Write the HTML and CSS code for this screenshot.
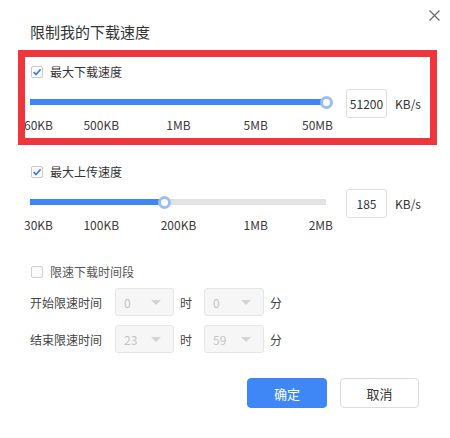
FILE: index.html
```html
<!DOCTYPE html>
<html lang="zh-CN">
<head>
<meta charset="utf-8">
<title>限制我的下载速度</title>
<link rel="stylesheet" href="styles.css">
</head>
<body>
<div class="dialog">
  <div class="title">限制我的下载速度</div>
  <button class="close" aria-label="关闭">
    <svg width="11" height="11" viewBox="0 0 11 11"><path d="M0.5 0.5 L10.5 10.5 M10.5 0.5 L0.5 10.5" stroke="#6a6a6a" stroke-width="1.2" fill="none"/></svg>
  </button>

  <div class="section highlight">
    <label class="check-row">
      <span class="checkbox checked"><svg width="10" height="10" viewBox="0 0 10 10"><path d="M1.6 5.2 L4 7.5 L8.6 2.4" stroke="#3d7ff0" stroke-width="1.8" fill="none"/></svg></span>
      <span class="check-label">最大下载速度</span>
    </label>
    <div class="slider-row">
      <div class="track">
        <div class="fill" style="width:100%"></div>
        <div class="thumb" style="left:100%"></div>
      </div>
      <div class="num-input">51200</div>
      <span class="unit">KB/s</span>
    </div>
    <div class="marks">
      <span class="mark first"><span>60KB</span></span>
      <span class="mark"><span>500KB</span></span>
      <span class="mark"><span>1MB</span></span>
      <span class="mark"><span>5MB</span></span>
      <span class="mark last"><span>50MB</span></span>
    </div>
  </div>

  <div class="section upload">
    <label class="check-row">
      <span class="checkbox checked"><svg width="10" height="10" viewBox="0 0 10 10"><path d="M1.6 5.2 L4 7.5 L8.6 2.4" stroke="#3d7ff0" stroke-width="1.8" fill="none"/></svg></span>
      <span class="check-label">最大上传速度</span>
    </label>
    <div class="slider-row">
      <div class="track">
        <div class="fill" style="width:45.6%"></div>
        <div class="thumb" style="left:45.6%"></div>
      </div>
      <div class="num-input">185</div>
      <span class="unit">KB/s</span>
    </div>
    <div class="marks">
      <span class="mark first"><span>30KB</span></span>
      <span class="mark"><span>100KB</span></span>
      <span class="mark"><span>200KB</span></span>
      <span class="mark"><span>1MB</span></span>
      <span class="mark last"><span>2MB</span></span>
    </div>
  </div>

  <div class="section period">
    <label class="check-row">
      <span class="checkbox"></span>
      <span class="check-label muted">限速下载时间段</span>
    </label>
    <div class="time-row first-row">
      <span class="row-label">开始限速时间</span>
      <span class="select"><span class="val">0</span><span class="arrow"></span></span>
      <span class="suffix">时</span>
      <span class="select wide"><span class="val">0</span><span class="arrow"></span></span>
      <span class="suffix">分</span>
    </div>
    <div class="time-row">
      <span class="row-label">结束限速时间</span>
      <span class="select"><span class="val">23</span><span class="arrow"></span></span>
      <span class="suffix">时</span>
      <span class="select wide"><span class="val">59</span><span class="arrow"></span></span>
      <span class="suffix">分</span>
    </div>
  </div>

  <div class="buttons">
    <button class="btn primary">确定</button>
    <button class="btn">取消</button>
  </div>
</div>
</body>
</html>
```

FILE: styles.css
```css
* { box-sizing: border-box; }
html, body { margin: 0; padding: 0; background: #fff; }
body {
  font-family: "Noto Sans CJK SC", "Noto Sans", sans-serif;
  color: #333;
  font-size: 12px;
}
.dialog {
  position: relative;
  width: 450px;
  height: 438px;
  overflow: hidden;
  padding-top: 22px;
}
.title {
  font-size: 15px;
  line-height: 20px;
  height: 20px;
  margin-left: 30px;
  color: #333;
}
.close {
  position: absolute;
  top: 10px;
  left: 429px;
  width: 11px;
  height: 11px;
  padding: 0;
  border: 0;
  background: none;
  line-height: 0;
}
.section { }
.highlight {
  margin: 8px 13px 0 18px;
  border: 7px solid #f2353b;
  padding: 5px 0 5px 5px;
  overflow: hidden;
}
.upload {
  margin-top: 17px;
  padding-left: 30px;
}
.period {
  margin-top: 29px;
  padding-left: 30px;
}
.check-row {
  display: flex;
  align-items: center;
  height: 20px;
}
.checkbox {
  width: 12px;
  height: 12px;
  margin-left: 1px;
  border: 1px solid #cfcfcf;
  border-radius: 2px;
  background: #fbfbfb;
  display: flex;
  align-items: center;
  justify-content: center;
}
.checkbox.checked { border-color: #c9c9c9; background: #fff; }
.check-label {
  margin-left: 7px;
  font-size: 12px;
  line-height: 20px;
  color: #333;
}
.check-label.muted { color: #555; }
.slider-row {
  display: flex;
  align-items: center;
  height: 29px;
  margin-top: 7px;
}
.track {
  position: relative;
  width: 296px;
  height: 6px;
  background: #e3e3e3;
  margin-bottom: 3px;
}
.fill {
  height: 100%;
  background: #3f86f4;
}
.thumb {
  position: absolute;
  top: 50%;
  width: 13px;
  height: 13px;
  margin: -6.5px 0 0 -6.5px;
  border-radius: 50%;
  border: 3px solid #9bbdf6;
  background: #fff;
}
.num-input {
  width: 41px;
  height: 29px;
  margin-left: 20px;
  border: 1px solid #dedede;
  border-radius: 3px;
  text-align: center;
  line-height: 27px;
  font-size: 12px;
  color: #333;
}
.unit {
  margin-left: 8px;
  font-size: 12px;
  color: #333;
}
.marks {
  display: flex;
  justify-content: space-between;
  width: 296px;
  height: 16px;
  margin-top: -1px;
  font-size: 12px;
  line-height: 16px;
  color: #3a3a3a;
}
.mark {
  width: 0;
  display: flex;
  justify-content: center;
  white-space: nowrap;
}
.mark.first { justify-content: flex-start; margin-left: -6px; }
.mark.last { justify-content: flex-end; margin-right: -7px; }
.time-row {
  display: flex;
  align-items: center;
  height: 28px;
  margin-top: 9px;
}
.time-row.first-row { margin-top: 6px; }
.row-label {
  width: 85px;
  color: #444;
  font-size: 12px;
}
.select {
  width: 59px;
  height: 28px;
  border: 1px solid #e6e6e6;
  border-radius: 3px;
  background: #f6f6f6;
  display: flex;
  align-items: center;
  justify-content: space-between;
  padding: 0 12px 0 8px;
  color: #c4c4c4;
  font-size: 12px;
}
.select.wide { width: 60px; }
.arrow {
  width: 0;
  height: 0;
  border-left: 5px solid transparent;
  border-right: 5px solid transparent;
  border-top: 5px solid #d4d4d4;
}
.suffix {
  margin: 0 12px 0 6px;
  color: #444;
  font-size: 12px;
}
.buttons {
  display: flex;
  justify-content: flex-end;
  gap: 13px;
  margin-top: 25px;
  padding-right: 31px;
}
.btn {
  width: 79px;
  height: 30px;
  border: 1px solid #dcdcdc;
  border-radius: 4px;
  background: #fff;
  color: #333;
  font-family: inherit;
  font-size: 13px;
  padding: 0;
}
.btn.primary {
  width: 80px;
  background: #3f86f6;
  border-color: #3f86f6;
  color: #fff;
}
```
